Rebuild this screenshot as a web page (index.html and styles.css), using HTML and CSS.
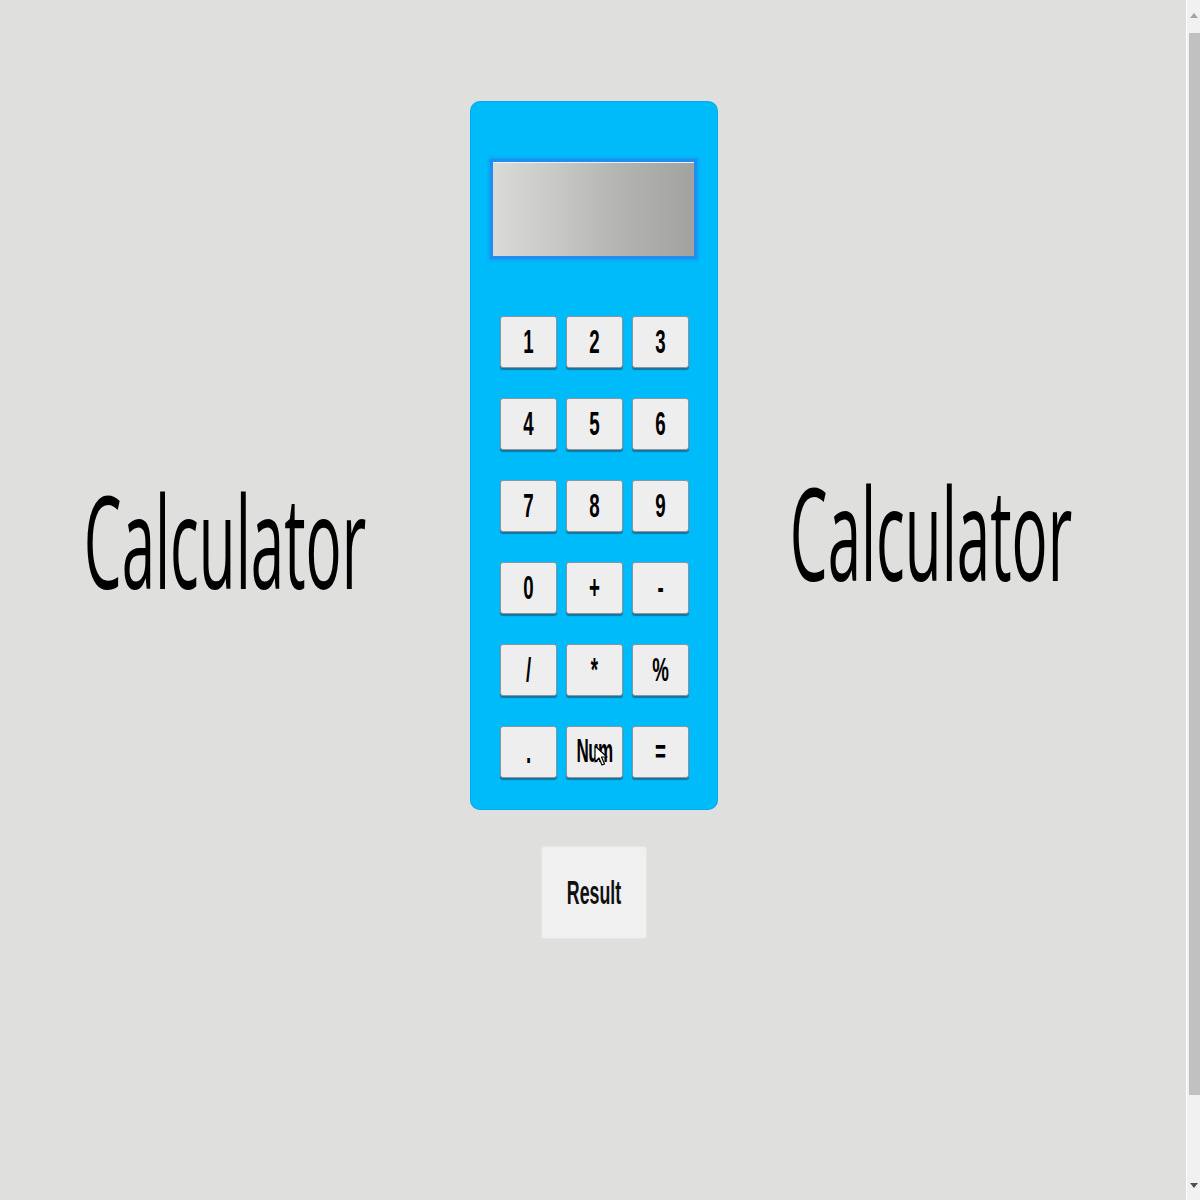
FILE: index.html
```html
<!DOCTYPE html>
<html>
<head>
<meta charset="utf-8">
<title>Calculator</title>
<link rel="stylesheet" href="styles.css">
</head>
<body>
<div class="page">
  <div class="side side-left"><h1 class="title"><span>Calculator</span></h1></div>
  <div class="center">
    <div class="calc">
      <div class="display"></div>
      <div class="keys">
        <button class="key"><span>1</span></button>
        <button class="key"><span>2</span></button>
        <button class="key"><span>3</span></button>
        <button class="key"><span>4</span></button>
        <button class="key"><span>5</span></button>
        <button class="key"><span>6</span></button>
        <button class="key"><span>7</span></button>
        <button class="key"><span>8</span></button>
        <button class="key"><span>9</span></button>
        <button class="key"><span>0</span></button>
        <button class="key"><span>+</span></button>
        <button class="key"><span>-</span></button>
        <button class="key"><span>/</span></button>
        <button class="key"><span>*</span></button>
        <button class="key"><span>%</span></button>
        <button class="key"><span>.</span></button>
        <button class="key key-num"><span>Num</span>
          <svg class="cursor" width="14" height="22" viewBox="0 0 14 22"><path d="M1 1 L1 17 L5 13 L8 20 L10.5 19 L7.5 12 L13 12 Z" fill="#fff" stroke="#000" stroke-width="1.2" stroke-linejoin="round"/></svg>
        </button>
        <button class="key"><span>=</span></button>
      </div>
    </div>
    <button class="result"><span>Result</span></button>
  </div>
  <div class="side side-right"><h1 class="title"><span>Calculator</span></h1></div>
</div>
<div class="scrollbar">
  <div class="arrow arrow-up"></div>
  <div class="thumb"></div>
  <div class="arrow arrow-down"></div>
</div>
</body>
</html>
```

FILE: styles.css
```css
html, body {
  margin: 0;
  padding: 0;
  height: 100%;
  overflow: hidden;
}
body {
  background: #dfdfdd;
  font-family: "Open Sans", "Liberation Sans", sans-serif;
  color: #000;
}
.page {
  display: flex;
  align-items: flex-start;
  width: 1186px;
  padding-top: 101px;
}
.side {
  display: flex;
  justify-content: center;
}
.side-left {
  width: 450px;
  padding-right: 20px;
  padding-top: 360px;
}
.side-right {
  width: 426px;
  padding-top: 352px;
}
.title {
  margin: 0;
  height: 160px;
  display: flex;
  align-items: center;
  justify-content: center;
  font-weight: 400;
  font-size: 60px;
  white-space: nowrap;
}
.title span {
  display: inline-block;
  line-height: 75px;
  transform: scaleY(2.133);
}
.center {
  width: 248px;
  display: flex;
  flex-direction: column;
  align-items: center;
}
.calc {
  box-sizing: border-box;
  width: 248px;
  height: 709px;
  background: #00bbf9;
  border-radius: 10px;
  padding: 58px 20px 0 20px;
  box-shadow: inset 0 0 0 1px rgba(0, 140, 230, 0.35);
}
.display {
  box-sizing: border-box;
  width: 207px;
  height: 100px;
  border: 3px solid #1f8ef0;
  box-shadow: 0 0 3px 1px rgba(30, 130, 240, 0.6), inset 0 1px 0 #e8f4fa;
  background: linear-gradient(90deg, #dadad8 0%, #c9c9c7 30%, #b5b5b3 60%, #a2a2a0 100%);
}
.keys {
  display: grid;
  grid-template-columns: repeat(3, 57px);
  grid-auto-rows: 52px;
  column-gap: 9px;
  row-gap: 30px;
  margin: 57px 0 0 10px;
}
.key {
  position: relative;
  box-sizing: border-box;
  width: 57px;
  height: 52px;
  padding: 0;
  margin: 0;
  background: #eeeeee;
  border: 1px solid #8796a0;
  border-radius: 3px;
  box-shadow: 0 2px 1px rgba(40, 60, 80, 0.55);
  font-family: "Liberation Sans", Arial, sans-serif;
  font-weight: 700;
  font-size: 18.7px;
  color: #000;
  white-space: nowrap;
  display: flex;
  align-items: center;
  justify-content: center;
}
.key span {
  display: inline-block;
  line-height: 22px;
  transform: scaleY(1.82);
}
.key-num span {
  letter-spacing: -0.6px;
  font-size: 17px;
  transform: scaleY(2);
}
.cursor {
  position: absolute;
  left: 27px;
  top: 18px;
}
.result {
  box-sizing: border-box;
  margin-top: 36px;
  width: 106px;
  height: 93px;
  padding: 0;
  background: #f0f0f0;
  border: 1px solid #e6e6e6;
  border-radius: 3px;
  font-family: "Liberation Sans", Arial, sans-serif;
  font-weight: 700;
  font-size: 17.8px;
  color: #111;
  display: flex;
  align-items: center;
  justify-content: center;
}
.result span {
  display: inline-block;
  line-height: 22px;
  transform: scaleY(1.85);
}
.scrollbar {
  position: fixed;
  top: 0;
  right: 0;
  width: 13px;
  height: 1200px;
  background: #f1f1f1;
  border-left: 1px solid #ffffff;
  display: flex;
  flex-direction: column;
  align-items: center;
}
.arrow {
  width: 0;
  height: 0;
  border-left: 4px solid transparent;
  border-right: 4px solid transparent;
}
.arrow-up {
  margin-top: 13px;
  border-bottom: 5px solid #a3a3a3;
}
.thumb {
  margin-top: 15px;
  width: 11px;
  height: 1062px;
  background: #c1c1c1;
  margin-left: 2px;
}
.arrow-down {
  margin-top: 88px;
  border-top: 5px solid #505050;
}
```
